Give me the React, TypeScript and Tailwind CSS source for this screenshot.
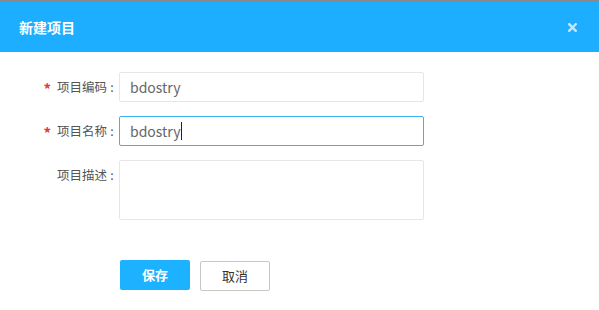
import React from 'react';

const font = { fontFamily: '"Noto Sans CJK SC", "Noto Sans", sans-serif' };

function Label({ text, required, top }: { text: string; required?: boolean; top?: boolean }) {
  return (
    <div
      className={`w-[119px] shrink-0 flex justify-end pr-[2px] text-[12.5px] text-[#555] ${top ? 'items-start pt-[6px]' : 'items-center'}`}
    >
      {required && <span className="text-[#e4393c] mr-[6px] text-[15px] font-bold leading-none mt-[3px]">*</span>}
      <span>{text}</span>
      <span className="w-[10px] text-center">:</span>
    </div>
  );
}

export default function App() {
  return (
    <div className="w-[599px] h-[310px] bg-white overflow-hidden" style={font}>
      <div className="h-[2px] bg-[#8a8a8a]" />
      <div className="h-[50px] bg-[#1eaeff] flex items-center justify-between pl-[19px] pr-[22px]">
        <span className="text-white font-bold text-[14px]">新建项目</span>
        <svg width="9" height="9" viewBox="0 0 9 9" className="mt-[1px]">
          <path d="M1.2 1.2 L7.8 7.8 M7.8 1.2 L1.2 7.8" stroke="#bde8ff" strokeWidth="2.4" strokeLinecap="square" />
        </svg>
      </div>

      <div className="pt-[20px] flex flex-col gap-[14px]">
        <div className="flex h-[30px]">
          <Label text="项目编码" required />
          <div className="w-[305px] h-[30px] border border-[#e6e6e6] rounded-[2px] flex items-center pl-[10px] text-[14px] text-[#666]">
            bdostry
          </div>
        </div>
        <div className="flex h-[30px]">
          <Label text="项目名称" required />
          <div className="w-[305px] h-[30px] border border-[#3cb3ef] rounded-[2px] flex items-center pl-[10px] text-[14px] text-[#666]">
            bdostry
            <span className="w-[1px] h-[18px] bg-[#222] ml-[1px]" />
          </div>
        </div>
        <div className="flex h-[60px]">
          <Label text="项目描述" top />
          <div className="w-[305px] h-[60px] border border-[#e6e6e6] rounded-[2px]" />
        </div>
      </div>

      <div className="flex gap-[10px] pl-[120px] mt-[40px]">
        <button className="w-[70px] h-[30px] rounded-[2px] bg-[#1cb2ff] text-white font-bold text-[13px]">
          保存
        </button>
        <button className="w-[70px] h-[30px] mt-[1px] rounded-[2px] border border-[#c9c7c2] bg-white text-[#333] text-[13px]">
          取消
        </button>
      </div>
    </div>
  );
}
